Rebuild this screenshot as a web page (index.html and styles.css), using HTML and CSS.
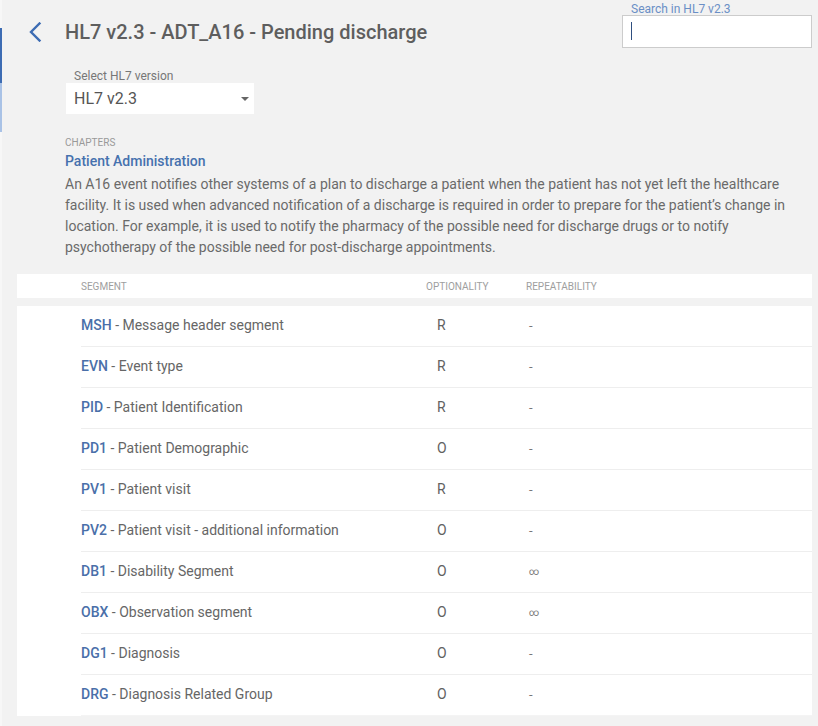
FILE: index.html
```html
<!DOCTYPE html>
<html lang="en">
<head>
<meta charset="utf-8">
<title>HL7 v2.3 - ADT_A16 - Pending discharge</title>
<link rel="stylesheet" href="styles.css">
</head>
<body>
<div class="app">
  <div class="rail">
    <div class="rail-dark"></div>
    <div class="rail-light"></div>
  </div>
  <main class="main">
    <header class="header">
      <div class="title-wrap">
        <svg class="back" width="14" height="20" viewBox="0 0 14 20" aria-hidden="true">
          <path d="M11.5 1.5 L3 10 L11.5 18.5" fill="none" stroke="#3d6cb3" stroke-width="2.4" stroke-linecap="square"/>
        </svg>
        <h1 class="title">HL7 v2.3 - ADT_A16 - Pending discharge</h1>
      </div>
      <div class="search">
        <div class="search-label">Search in HL7 v2.3</div>
        <div class="search-input"><span class="caret"></span></div>
      </div>
    </header>

    <section class="version">
      <div class="version-label">Select HL7 version</div>
      <div class="select">
        <span class="select-value">HL7 v2.3</span>
        <span class="select-arrow"></span>
      </div>
    </section>

    <section class="chapter">
      <div class="chapter-kicker">CHAPTERS</div>
      <div class="chapter-name">Patient Administration</div>
      <p class="chapter-text">An A16 event notifies other systems of a plan to discharge a patient when the patient has not yet left the healthcare facility. It is used when advanced notification of a discharge is required in order to prepare for the patient’s change in location. For example, it is used to notify the pharmacy of the possible need for discharge drugs or to notify psychotherapy of the possible need for post-discharge appointments.</p>
    </section>

    <div class="table-head">
      <div class="cols">
        <span>SEGMENT</span>
        <span>OPTIONALITY</span>
        <span>REPEATABILITY</span>
      </div>
    </div>

    <div class="table-body">
      <div class="cols row"><span class="seg"><b>MSH</b> - Message header segment</span><span class="opt">R</span><span class="rep">-</span></div>
      <div class="cols row"><span class="seg"><b>EVN</b> - Event type</span><span class="opt">R</span><span class="rep">-</span></div>
      <div class="cols row"><span class="seg"><b>PID</b> - Patient Identification</span><span class="opt">R</span><span class="rep">-</span></div>
      <div class="cols row"><span class="seg"><b>PD1</b> - Patient Demographic</span><span class="opt">O</span><span class="rep">-</span></div>
      <div class="cols row"><span class="seg"><b>PV1</b> - Patient visit</span><span class="opt">R</span><span class="rep">-</span></div>
      <div class="cols row"><span class="seg"><b>PV2</b> - Patient visit - additional information</span><span class="opt">O</span><span class="rep">-</span></div>
      <div class="cols row"><span class="seg"><b>DB1</b> - Disability Segment</span><span class="opt">O</span><span class="rep inf">∞</span></div>
      <div class="cols row"><span class="seg"><b>OBX</b> - Observation segment</span><span class="opt">O</span><span class="rep inf">∞</span></div>
      <div class="cols row"><span class="seg"><b>DG1</b> - Diagnosis</span><span class="opt">O</span><span class="rep">-</span></div>
      <div class="cols row last"><span class="seg"><b>DRG</b> - Diagnosis Related Group</span><span class="opt">O</span><span class="rep">-</span></div>
    </div>
  </main>
</div>
</body>
</html>
```
FILE: styles.css
```css
* { box-sizing: border-box; }

html, body {
  margin: 0;
  padding: 0;
  background: #f2f2f2;
  font-family: Roboto, "Liberation Sans", Arial, sans-serif;
  color: #666666;
}

.app {
  display: flex;
  min-height: 726px;
}

.rail {
  width: 2px;
  flex: none;
  display: flex;
  flex-direction: column;
  background: #f7f7f7;
}
.rail-dark {
  margin-top: 28px;
  height: 55px;
  background: #3d6cb3;
}
.rail-light {
  height: 49px;
  background: #a9c2e6;
}

.main {
  flex: 1;
  padding: 0 6px 0 15px;
}

/* header */
.header {
  display: flex;
  justify-content: space-between;
  align-items: flex-start;
}
.title-wrap {
  display: flex;
  align-items: center;
  padding: 20px 0 0 11px;
}
.back { display: block; flex: none; }
.title {
  margin: 0 0 0 23px;
  font-size: 20px;
  line-height: 24px;
  font-weight: 500;
  color: #5e5e5e;
}
.search {
  width: 190px;
  padding-top: 3px;
}
.search-label {
  font-size: 12px;
  line-height: 12px;
  color: #6a8fc6;
  padding-left: 9px;
}
.search-input {
  height: 33px;
  background: #ffffff;
  border: 1px solid #cccccc;
  padding: 6px 0 0 8px;
}
.caret {
  display: block;
  width: 1px;
  height: 18px;
  background: #2f4f80;
}

/* version select */
.version {
  margin: 21px 0 0 49px;
}
.version-label {
  font-size: 12px;
  line-height: 14px;
  color: #777777;
  padding-left: 8px;
}
.select {
  width: 188px;
  height: 31px;
  background: #ffffff;
  display: flex;
  align-items: center;
  justify-content: space-between;
  padding: 0 5px 0 8px;
}
.select-value {
  font-size: 16px;
  color: #555555;
}
.select-arrow {
  width: 0;
  height: 0;
  border-left: 4.5px solid transparent;
  border-right: 4.5px solid transparent;
  border-top: 4.5px solid #666666;
}

/* chapter */
.chapter {
  margin: 23px 0 0 48px;
}
.chapter-kicker {
  font-size: 10px;
  line-height: 12px;
  color: #999999;
}
.chapter-name {
  margin-top: 3px;
  font-size: 14px;
  line-height: 18px;
  font-weight: 500;
  color: #4671ae;
}
.chapter-text {
  margin: 4px 0 0 0;
  font-size: 14px;
  line-height: 21px;
  color: #6a6a6a;
}

/* table */
.cols {
  display: grid;
  grid-template-columns: 345px 100px 1fr;
}
.table-head {
  margin-top: 16px;
  background: #ffffff;
  height: 24px;
  padding-left: 64px;
}
.table-head .cols {
  height: 24px;
  align-items: center;
  font-size: 10px;
  color: #9e9e9e;
}
.table-body {
  margin-top: 8px;
  background: #ffffff;
  padding-left: 64px;
}
.row {
  height: 41px;
  align-items: center;
  padding-bottom: 2px;
  border-bottom: 1px solid #eeeeee;
  font-size: 14px;
  color: #666666;
}
.row.last { border-bottom-color: #f4f4f4; }
.seg b {
  font-weight: 500;
  color: #4a6fa9;
}
.opt {
  padding-left: 11px;
  color: #616161;
}
.rep {
  padding-left: 3px;
  color: #777777;
  font-size: 13px;
}
.rep.inf {
  font-size: 10px;
}
```
